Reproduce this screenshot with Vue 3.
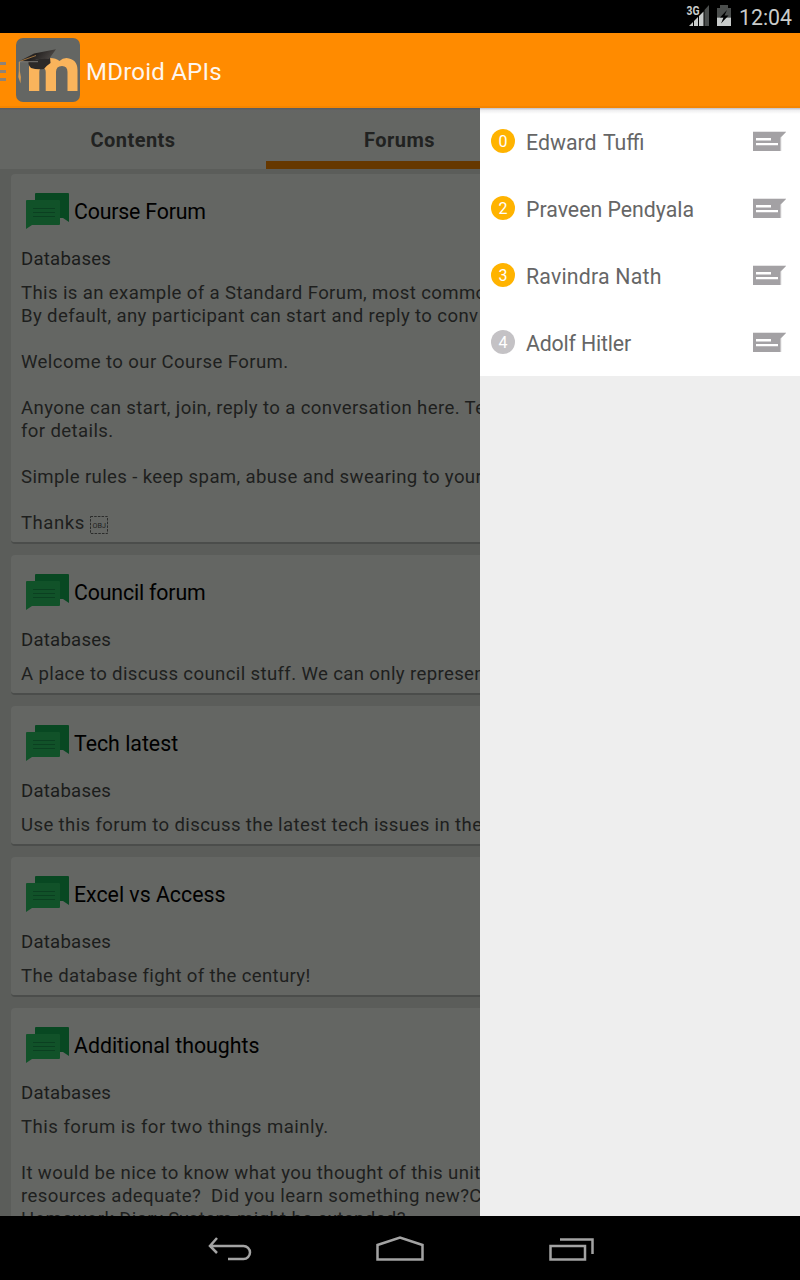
<script setup>
const forums = [
  {
    title: 'Course Forum',
    titleSpacing: -0.17,
    lines: [
      ['This is an example of a Standard Forum, most commo', 0.37],
      ['By default, any participant can start and reply to conv', 0.37],
      ['', 0],
      ['Welcome to our Course Forum.', 0.4],
      ['', 0],
      ['Anyone can start, join, reply to a conversation here. Te', 0.38],
      ['for details.', 0.37],
      ['', 0],
      ['Simple rules - keep spam, abuse and swearing to your', 0.37],
      ['', 0],
      ['Thanks ', 0.5],
    ],
    obj: true,
  },
  {
    title: 'Council forum',
    titleSpacing: -0.15,
    lines: [['A place to discuss council stuff. We can only represen', 0.36]],
  },
  {
    title: 'Tech latest',
    titleSpacing: 0,
    lines: [['Use this forum to discuss the latest tech issues in the', 0.37]],
  },
  { title: 'Excel vs Access', titleSpacing: 0, lines: [['The database fight of the century!', 0.33]] },
  {
    title: 'Additional thoughts',
    titleSpacing: 0,
    lines: [
      ['This forum is for two things mainly.', 0.47],
      ['', 0],
      ['It would be nice to know what you thought of this unit', 0.37],
      ['resources adequate?  Did you learn something new?C', 0.4],
      ['Homework Diary System might be extended?', 0.37],
    ],
  },
]
const contacts = [
  { count: 0, name: 'Edward Tuffi', active: true, gap: 1.5, spacing: 0 },
  { count: 2, name: 'Praveen Pendyala', active: true, gap: 0, spacing: 0 },
  { count: 3, name: 'Ravindra Nath', active: true, gap: 0, spacing: 0.2 },
  { count: 4, name: 'Adolf Hitler', active: false, gap: 0, spacing: -0.16 },
]
</script>

<template>
  <div class="screen">
    <header class="status">
      <svg class="status-icons" width="50" height="22" viewBox="0 0 50 22">
        <path d="M20.500 5L25 0V21H20.500Z" fill="#4b4e4d" />
        <path d="M5 21L9 17V21ZM10 16L14 12V21H10ZM15 11L19.500 6.500V21H15Z" fill="#c9cccb" />
        <text x="2.500" y="9.500" class="net" textLength="13" lengthAdjust="spacingAndGlyphs">3G</text>
        <path d="M36 0H44V3H47V12.500H33V3H36Z" fill="#4b4e4d" />
        <path d="M33 12.500H47V21H33Z" fill="#c9cccb" />
        <path d="M43 5L36 12.500H39.500L37 18.500L44.500 10.500H40.500Z" fill="#000" />
      </svg>
      <span class="clock">12:04</span>
    </header>

    <div class="actionbar">
      <div class="burger"><i></i><i></i><i></i></div>
      <svg class="logo" width="64" height="64" viewBox="0 0 64 64">
        <defs>
          <linearGradient id="capFill" x1="0" y1="0" x2="1" y2="0.3">
            <stop offset="0" stop-color="#44413f" />
            <stop offset="0.5" stop-color="#23201f" />
            <stop offset="1" stop-color="#4b4744" />
          </linearGradient>
        </defs>
        <rect width="64" height="64" rx="7" fill="#646663" />
        <path
          d="M13 53V27L24 25Q28 20 34 20Q40 20 43.500 23Q46.500 20 50.500 20Q61.500 21 61.500 32V53H51.500V34Q51.500 28 46 28Q40 28 40 34V53H29.700V34Q29.700 30 26.500 30Q23.300 30 23.300 34V53Z"
          fill="#f9b45c"
        />
        <path d="M12.500 23L34 19L34.500 25Q30 28 28 31Q21 32 15 30Q13 28 12.500 26Z" fill="#2c2928" />
        <path d="M2.700 23.500L18 15.500L40 11.300L33 21Q22 19.500 14 24Z" fill="url(#capFill)" />
        <path d="M3.500 23.500L20 17.500" stroke="#b98748" stroke-width="0.8" fill="none" />
        <path d="M3 23.700H22" stroke="#8e8a86" stroke-width="0.8" fill="none" />
        <path d="M2.800 24V33L2.300 39L4.500 45.500L4.900 39L3.800 33V24Z" fill="#d79b50" />
      </svg>
      <h1>MDroid APIs</h1>
    </div>

    <div class="body">
      <main>
        <nav class="tabs">
          <span class="tab">Contents</span>
          <span class="tab current">Forums</span>
        </nav>
        <section class="list">
          <article v-for="f in forums" :key="f.title" class="card">
            <div class="head">
              <svg width="44" height="38" viewBox="0 0 44 38">
                <path d="M10 1H42Q43 1 43 2V30L37 26H10Q9 26 9 25V2Q9 1 10 1Z" fill="#084822" />
                <path d="M1 8H33Q34 8 34 9V32Q34 33 33 33H6L0 37V9Q0 8 1 8Z" fill="#115229" />
                <path d="M7 16.500H29M7 20.500H29M7 24.500H29" stroke="#0b4021" stroke-width="1" />
              </svg>
              <h2 :style="{ letterSpacing: f.titleSpacing + 'px' }">{{ f.title }}</h2>
            </div>
            <p class="course">Databases</p>
            <div class="text">
              <p v-for="([line, spacing], i) in f.lines" :key="i" :style="{ letterSpacing: spacing + 'px' }">{{ line }}<svg
                  v-if="f.obj && i === f.lines.length - 1" class="obj" width="18" height="18" viewBox="0 0 18 18">
                  <rect x="0.5" y="0.5" width="17" height="17" fill="none" stroke="#2b2c2b" stroke-dasharray="2.500 1.200" />
                  <text x="2.500" y="11.500" textLength="13.500" lengthAdjust="spacingAndGlyphs">OBJ</text>
                </svg></p>
            </div>
          </article>
        </section>
      </main>

      <aside>
        <div v-for="c in contacts" :key="c.name" class="contact">
          <span class="badge" :class="{ idle: !c.active }">{{ c.count }}</span>
          <span class="name" :style="{ wordSpacing: c.gap + 'px', letterSpacing: c.spacing + 'px' }">{{ c.name }}</span>
          <svg width="33" height="20" viewBox="0 0 33 20">
            <path d="M0 0H33V1L28.500 6V20H0Z" fill="#e6e5e6" />
            <path d="M0 1H33L27.500 6.500V20H0Z" fill="#a3a1a4" />
            <path d="M3 7H18V9.500H3ZM3 12H25V14.300H3Z" fill="#fff" />
          </svg>
        </div>
      </aside>
    </div>

    <footer>
      <svg width="44" height="26" viewBox="0 0 44 26">
        <path d="M9 2L2 10L9 17M2 10H35.500C39 10 42 13 42 16.500S39 23 35.500 23H20" />
      </svg>
      <svg width="48" height="26" viewBox="0 0 48 26">
        <path d="M1.500 23.500V9L24 1.500L46.500 9V23.500Z" />
      </svg>
      <svg width="46" height="26" viewBox="0 0 46 26">
        <path d="M2.500 10H37V23.500H2.500ZM12 3.500H44.500V18" />
      </svg>
    </footer>
  </div>
</template>

<style>
body { background: #000; }
</style>

<style scoped>
* { box-sizing: border-box; margin: 0; }
.screen {
  width: 800px;
  height: 1280px;
  display: flex;
  flex-direction: column;
  overflow: hidden;
  background: #000;
  font-family: Roboto, "Noto Sans", sans-serif;
}
svg { display: block; flex: none; }
.status {
  height: 33px;
  display: flex;
  justify-content: flex-end;
  padding-right: 8px;
  color: #c9cccb;
}
.status-icons { margin: 5px 5px 0 0; }
.net {
  font-size: 12px;
  font-weight: 700;
  fill: #c9cccb;
  stroke: #000;
  stroke-width: 1.500px;
  paint-order: stroke;
}
.clock { font-size: 21.300px; line-height: 35px; }
.actionbar {
  height: 75px;
  flex: none;
  display: flex;
  align-items: flex-start;
  background: #ff8b00;
  border-bottom: 2px solid #f58500;
}
.burger {
  width: 6px;
  margin: 29px 10px 0 0;
  display: flex;
  flex-direction: column;
  gap: 5px;
}
.burger i { height: 3px; background: #8f8377; }
.logo { margin-top: 5px; }
h1 {
  margin-left: 6px;
  font-size: 24px;
  font-weight: 400;
  letter-spacing: 0.220px;
  line-height: 78px;
  color: #fdf6ee;
}
.body {
  height: 1108px;
  flex: none;
  display: flex;
  position: relative;
  overflow: hidden;
  background: #eee;
}
.body::before {
  content: "";
  position: absolute;
  inset: 0 0 auto;
  height: 6px;
  z-index: 1;
  background: linear-gradient(rgba(70, 70, 90, 0.35), rgba(100, 95, 110, 0.1) 40%, rgba(100, 95, 110, 0));
}
main { width: 480px; overflow: hidden; background: #5b5d5a; }
.tabs { width: 800px; height: 61px; display: flex; background: #646663; }
.tab {
  width: 266px;
  text-align: center;
  font-size: 20px;
  font-weight: 700;
  letter-spacing: 0.450px;
  line-height: 64px;
  color: #212221;
}
.current { width: 267px; border-bottom: 8px solid #663800; }
.list { width: 800px; padding: 5px 11px; }
.card {
  margin-bottom: 11px;
  padding: 18px 10px 7px;
  border-radius: 4px;
  background: #646663;
  border-bottom: 2px solid #4b4d4b;
}
.head { display: flex; margin-left: 5px; height: 38px; }
h2 { margin-left: 4px; font-size: 21.300px; font-weight: 400; line-height: 39px; color: #000; }
.course {
  margin-top: 17px;
  font-size: 18.600px;
  letter-spacing: 0.220px;
  line-height: 24px;
  color: #1b1c1b;
}
.text { margin-top: 11px; }
.text p {
  height: 23px;
  font-size: 18.600px;
  line-height: 23px;
  white-space: pre;
  color: #1e1f1e;
}
.obj { display: inline-block; vertical-align: -5px; }
.obj text { font-size: 7px; letter-spacing: 0; fill: #1e1f1e; }
aside { width: 320px; }
.contact {
  height: 67px;
  display: flex;
  align-items: center;
  padding: 0 14px 1px 11px;
  background: #fff;
}
.badge {
  width: 24px;
  height: 24px;
  border-radius: 50%;
  background: #ffb300;
  color: #fff;
  font-size: 16px;
  line-height: 25px;
  text-align: center;
}
.idle { background: #c4c2c5; }
.name { flex: 1; margin-left: 11px; font-size: 21.300px; line-height: 28px; padding-top: 3px; color: #666; }
footer { height: 64px; display: flex; padding: 20px 0 0 208px; }
footer svg + svg { margin-left: 124px; }
footer path { fill: none; stroke: #a3a3a3; stroke-width: 2.500; }
</style>
